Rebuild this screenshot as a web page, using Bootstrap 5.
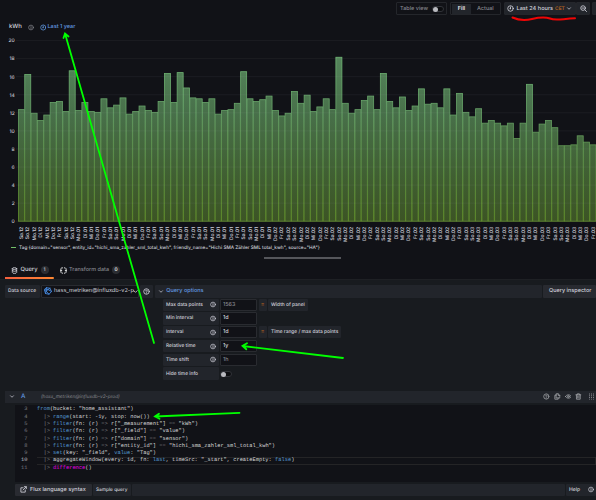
<!DOCTYPE html>
<html lang="en">
<head>
  <meta charset="UTF-8">
  <meta name="viewport" content="width=device-width, initial-scale=1.0">
  <title>Edit panel</title>
  <link href="https://cdn.jsdelivr.net/npm/bootstrap@5.3.0/dist/css/bootstrap.min.css" rel="stylesheet">
  <style>
    body {
      width: 596px;
      height: 500px;
      overflow: hidden;
      background: #111217;
      color: #d2d2dc;
      font: 500 5.5px/8px Inter, "Liberation Sans", sans-serif;
      text-rendering: geometricPrecision;
      white-space: nowrap;
    }
    svg { display: block; flex: none; }
    .ico { width: 7px; height: 7px; fill: none; stroke: currentColor; stroke-width: 1.9; stroke-linecap: round; stroke-linejoin: round; }
    .blue { color: #6299e0; }
    .dim { color: #85868d; }
    .toolbar { height: 16px; padding: 2px 0 2px 396px; }
    .tool-box { height: 13px; border: 1px solid #24262b; border-radius: 1px; flex: none; }
    .tool-solid { background: #22252b; }
    .switch { width: 12px; height: 6px; border: .5px solid #303238; border-radius: 3px; background: #0c0d10; }
    .switch::before { content: ""; display: block; width: 5px; height: 5px; border-radius: 50%; background: #b9bac0; }
    .panel-title { height: 10px; margin-top: 6px; padding-left: 9px; }
    .legend { height: 10px; padding: 1px 0 0 10.5px; font-size: 4.72px; }
    .legend i { width: 5px; height: 1.4px; background: #73bf69; margin-right: 3.5px; }
    .handle { height: 2px; width: 77px; margin: 4.5px 0 0 264px; background: #55565b; }
    .tabs { height: 18px; margin-top: 2px; padding-left: 5px; font-size: 5.5px; }
    .tab-on { width: 48.5px; height: 18px; padding: 1px 0 0 6px; background: linear-gradient(90deg, #f55f3e, #ff8833) bottom/100% 2px no-repeat; }
    .count { min-width: 8px; height: 8px; border-radius: 4px; background: #2b2d32; font-size: 4.8px; }
    .editor { height: 223px; background: #181b1f; border-top: 1px solid #1e2024; }
    .source-row { height: 13px; margin-top: 5px; padding-left: 5px; }
    .cell { height: 12.4px; background: #22252b; border-radius: 1px; padding: 0 3px; flex: none; }
    .field { height: 12.4px; width: 37px; background: #111217; border: 1px solid #292b30; border-radius: 1px; padding: 0 2px; flex: none; }
    .opts { padding-left: 163px; padding-top: .3px; font-size: 4.85px; }
    .opt { height: 13.8px; gap: 1.5px; }
    .opt-name { width: 55.5px; }
    .opt .field { font-size: 5.4px; }
    .eq { width: 8px; color: #c46c1e; padding: 0; font-size: 5.5px; }
    .query-head { height: 12.5px; margin: 10px 0 0 5px; padding-left: 4px; background: #22252b; }
    .code { height: 77.5px; margin: 1.5px 0 0 15px; background: #111217; padding-top: 1.8px; font: 400 5.37px/7.3px "Liberation Mono", monospace; color: #d8d8d8; }
    .code > div { height: 7.3px; white-space: pre; display: flex; }
    .code b { font-weight: 400; width: 22px; padding-right: 9.5px; text-align: right; color: #7c7d82; flex: none; }
    .code .on { box-shadow: inset 22px 0 #111217, inset 0 0 0 .7px #2b2b2d; }
    .code .on b { color: #c6c6c9; }
    .code em { font-style: normal; color: #569cd6; }
    .code s { text-decoration: none; color: #8b8b8e; }
    .code u { text-decoration: none; color: #e800e8; }
    .foot { height: 12.5px; margin: 1.7px 0 0 15px; }
    .marks { position: absolute; left: 0; top: 0; pointer-events: none; }
  </style>
</head>
<body>

<!-- icon shapes -->
<svg width="0" height="0" class="position-absolute">
  <symbol id="clock" viewBox="0 0 16 16"><circle cx="8" cy="8" r="6.3"/><path d="M8 4.5V8.5M8 8.5H6.5"/></symbol>
  <symbol id="info" viewBox="0 0 16 16"><circle cx="8" cy="8" r="6.3"/><path d="M8 7.5V11M8 5V5.2"/></symbol>
  <symbol id="help" viewBox="0 0 16 16"><circle cx="8" cy="8" r="6.3"/><path d="M6 6.5C6 4 10 4 10 6.5C10 8 8 8 8 9.3M8 11.5V11.7"/></symbol>
  <symbol id="down" viewBox="0 0 16 16"><path d="M4 6L8 10L12 6"/></symbol>
  <symbol id="zoomout" viewBox="0 0 16 16"><circle cx="7" cy="7" r="5.3"/><path d="M11 11L15 15M4.7 7H9.3"/></symbol>
  <symbol id="db" viewBox="0 0 16 16"><ellipse cx="8" cy="3.5" rx="5" ry="2"/><path d="M3 3.5V12.5C3 15.4 13 15.4 13 12.5V3.5M3 8C3 10.7 13 10.7 13 8"/></symbol>
  <symbol id="transform" viewBox="0 0 16 16"><path d="M2 6V3.5L4 2H6M10 2H12L14 4V6M14 10V12L12 14H10M6 14H4L2 12V10M1 8H4M12 8H15"/></symbol>
  <symbol id="copy" viewBox="0 0 16 16"><path d="M5 4V1.5H10L14 5.5V11.5H5V4M10 1.5V5.5H14M5 5H2V14.5H10V11.5"/></symbol>
  <symbol id="eye" viewBox="0 0 16 16"><path d="M1 8C4 2.5 12 2.5 15 8C12 13.5 4 13.5 1 8Z"/><circle cx="8" cy="8" r="2.2"/></symbol>
  <symbol id="trash" viewBox="0 0 16 16"><path d="M2 4H14M5.5 4V1.5H10.5V4M3.5 4V14.5H12.5V4M6.5 7V11.5M9.5 7V11.5"/></symbol>
  <symbol id="ext" viewBox="0 0 16 16"><path d="M12 9V14H2V4H7M7 9L14 2M10 1.5H14.5V6"/></symbol>
  <symbol id="influx" viewBox="0 0 16 16"><path d="M5 1.5L12 2.5L15 9L10 14.5L3 13L1 6ZM5 1.5L4 8L10 14.5M12 2.5L4 8L3 13M1 6L8 5L15 9"/></symbol>
</svg>

<div class="toolbar d-flex">
  <div class="tool-box d-flex align-items-center dim" style="width:51px; padding-left:3px">
    <span>Table view</span><span class="switch ms-1"></span>
  </div>
  <div class="tool-box d-flex align-items-center dim" style="width:51px; margin-left:3px; padding-left:1px">
    <span class="tool-solid text-center text-light" style="width:19px; padding:1px 0">Fill</span>
    <span style="margin-left:6px">Actual</span>
  </div>
  <div class="tool-box tool-solid d-flex align-items-center" style="width:72px; margin-left:3px; padding-left:2px">
    <svg class="ico"><use href="#clock"/></svg>
    <span style="margin-left:2.5px; font-size:5.6px">Last 24 hours</span>
    <span style="margin-left:2px; font-size:4.9px; color:#c46c1e">CET</span>
    <svg class="ico" style="width:6px; margin-left:1px"><use href="#down"/></svg>
  </div>
  <div class="tool-box tool-solid d-flex align-items-center justify-content-center" style="width:14px"><svg class="ico"><use href="#zoomout"/></svg></div>
  <div class="tool-box tool-solid" style="width:10px; margin-left:2px"></div>
</div>

<div class="panel-title d-flex align-items-center">
  <span style="font-size:6px">kWh</span>
  <svg class="ico dim" style="width:6px; margin-left:6px"><use href="#info"/></svg>
  <span class="blue d-flex align-items-center" style="margin-left:6px">
    <svg class="ico" style="width:6.5px; margin-right:1px"><use href="#clock"/></svg>Last 1 year
  </span>
</div>

<svg id="chart" width="596" height="210" viewBox="0 32 596 210">
  <defs>
    <linearGradient id="barFill" gradientUnits="userSpaceOnUse" x1="0" y1="40" x2="0" y2="221">
      <stop offset="0" stop-color="#588b60"/>
      <stop offset=".4" stop-color="#48704a"/>
      <stop offset=".75" stop-color="#405f32"/>
      <stop offset="1" stop-color="#3c5425"/>
    </linearGradient>
    <linearGradient id="barLine" gradientUnits="userSpaceOnUse" x1="0" y1="40" x2="0" y2="221">
      <stop offset="0" stop-color="#73bf79"/>
      <stop offset=".4" stop-color="#65a066"/>
      <stop offset=".75" stop-color="#5c8e40"/>
      <stop offset="1" stop-color="#618f2b"/>
    </linearGradient>
  </defs>
</svg>

<div class="legend d-flex align-items-center"><i></i><span>Tag {domain="sensor", entity_id="hichi_sma_zahler_sml_total_kwh", friendly_name="Hichi SMA Zähler SML total_kwh", source="HA"}</span></div>
<div class="handle"></div>

<div class="tabs d-flex">
  <div class="tab-on d-flex align-items-center">
    <svg class="ico"><use href="#db"/></svg><span style="margin:0 3px 0 2.5px; font-size:5.8px">Query</span>
    <span class="count d-flex align-items-center justify-content-center">1</span>
  </div>
  <div class="d-flex align-items-center dim" style="margin-left:6px; padding-top:1px">
    <svg class="ico text-light"><use href="#transform"/></svg><span style="margin:0 3px 0 2.5px">Transform data</span>
    <span class="count d-flex align-items-center justify-content-center text-light">0</span>
  </div>
</div>

<div class="editor">
  <div class="source-row d-flex">
    <div class="cell d-flex align-items-center h-100" style="width:35px; font-size:4.9px">Data source</div>
    <div class="field d-flex align-items-center h-100" style="width:98px; margin-left:1px; font-size:5.6px; font-weight:400">
      <svg class="ico" style="width:8px; height:8px; stroke:#4385d8"><use href="#influx"/></svg>
      <span style="width:77px; margin-left:2px">hass_metriken@influxdb-v2-p</span>
      <svg class="ico" style="margin-left:1px"><use href="#down"/></svg>
    </div>
    <div class="cell d-flex align-items-center h-100" style="width:13px; margin-left:1px"><svg class="ico"><use href="#help"/></svg></div>
    <div class="cell d-flex align-items-center flex-grow-1 h-100" style="margin-left:2px">
      <svg class="ico" style="width:6px"><use href="#down"/></svg><span class="blue" style="margin-left:2.3px">Query options</span>
    </div>
    <div class="cell d-flex align-items-center h-100" style="width:53px; margin-left:1px; padding-left:6px; background:#282a30">Query inspector</div>
  </div>

  <div class="opts" id="options"></div>

  <div class="query-head d-flex align-items-center">
    <svg class="ico" style="width:6px"><use href="#down"/></svg>
    <span class="blue" style="margin-left:6px; font-size:6.2px">A</span>
    <span class="dim fst-italic" style="margin-left:15.5px; font-size:4.75px; font-weight:400">(hass_metriken@influxdb-v2-prod)</span>
    <div class="d-flex ms-auto dim" style="gap:4px; color:#a0a1a7 !important">
      <svg class="ico" style="width:6.7px"><use href="#help"/></svg>
      <svg class="ico" style="width:6.7px"><use href="#copy"/></svg>
      <svg class="ico" style="width:6.7px"><use href="#eye"/></svg>
      <svg class="ico" style="width:6.7px"><use href="#trash"/></svg>
      <svg width="8" height="7" style="margin-left:2px" stroke="#85868d" stroke-dasharray="1 .8"><path d="M1.5 .5V6.5M3.5 .5V6.5M5.5 .5V6.5"/></svg>
    </div>
  </div>

  <div class="code">
    <div><b>3</b><em>from</em>(bucket: "home_assistant")</div>
    <div><b>4</b><s>  |&gt; </s><em>range</em>(start: -1y, stop: now())</div>
    <div><b>5</b><s>  |&gt; </s><em>filter</em>(fn: (r) <s>=&gt;</s> r["_measurement"] <s>==</s> "kWh")</div>
    <div><b>6</b><s>  |&gt; </s><em>filter</em>(fn: (r) <s>=&gt;</s> r["_field"] <s>==</s> "value")</div>
    <div><b>7</b><s>  |&gt; </s><em>filter</em>(fn: (r) <s>=&gt;</s> r["domain"] <s>==</s> "sensor")</div>
    <div><b>8</b><s>  |&gt; </s><em>filter</em>(fn: (r) <s>=&gt;</s> r["entity_id"] <s>==</s> "hichi_sma_zahler_sml_total_kwh")</div>
    <div><b>9</b><s>  |&gt; </s><em>set</em>(key: "_field", <em>value</em>: "Tag")</div>
    <div class="on"><b>10</b><s>  |&gt; </s>aggregateWindow(every: 1d, fn: <em>last</em>, timeSrc: "_start", createEmpty: <em>false</em>)</div>
    <div><b>11</b><s>  |&gt; </s><u>difference</u>()</div>
  </div>

  <div class="foot d-flex">
    <div class="cell d-flex align-items-center" style="width:77px; padding-left:5px; background:#292b31">
      <svg class="ico" style="margin-right:3px"><use href="#ext"/></svg>Flux language syntax
    </div>
    <div class="cell d-flex align-items-center" style="width:38px; margin-left:1px; font-size:4.75px">Sample query</div>
    <div class="cell flex-grow-1" style="margin-left:1px"></div>
    <div class="cell d-flex align-items-center" style="width:30px; margin-left:1px; font-size:5.1px">Help<svg class="ico" style="width:6px; margin-left:8px"><use href="#info"/></svg></div>
  </div>
</div>

<!-- hand drawn annotations -->
<svg class="marks" width="596" height="500" fill="none" stroke="#00ff00" stroke-width="1.8" stroke-linecap="round">
  <path d="M154 343L65 33.5M63.5 38L65 33.5L68.5 36.5"/>
  <path d="M343 358L242.5 346M247 343.3L242.5 346L246.3 349.3"/>
  <path d="M239.5 412.8L155 416.5M159 413.8L155 416.5L159.5 418.8"/>
  <path d="M512.5 17.5C519 20.5 525 20.8 532 19C541 17 545 17 550 18.5C555 21 561 19 575 18.3" stroke="#f00505" stroke-width="2"/>
</svg>

<script src="https://cdn.jsdelivr.net/npm/bootstrap@5.3.0/dist/js/bootstrap.bundle.min.js"></script>
<script>
  // daily consumption in kWh
  const values = [
    12.4, 16.3, 12, 11.2, 11.8, 13.2, 13.3, 12.2, 16.7, 12.3, 13.2, 12.2, 12.1, 13.6, 12.6, 12.9, 13.7, 11.9, 12.2, 12.8,
    12.3, 12.1, 13.3, 16.4, 13.2, 16.5, 14.8, 13.7, 13.6, 13.2, 13.6, 11.9, 12.3, 12.4, 13.1, 16.6, 13.6, 13.3, 13.5, 13.9,
    12.3, 11.7, 12, 14.4, 13.1, 14, 12.2, 12.7, 13.6, 12.4, 18.2, 13.1, 12, 12.4, 13.4, 13.9, 12.4, 16.4, 13.3, 12.6,
    13.8, 12.3, 12.8, 14.7, 13, 13.1, 12.6, 14.7, 11.8, 14.2, 12.1, 11.6, 12.5, 10.9, 11.2, 10.9, 10.6, 10.9, 9.2, 10.9,
    15.2, 9.9, 10.8, 11.2, 10.4, 8.4, 8.4, 8.5, 9.5, 8.8, 8.5
  ];
  const days = ['Sa', 'So', 'Mo', 'Di', 'Mi', 'Do', 'Fr'];
  const step = 6.35, left = 18, base = 221.2, unit = 9.03;

  let svg = '';
  values.forEach((v, i) => {
    const x = left + i * step;
    const top = base - v * unit;
    const month = i < 9 ? '12' : i < 40 ? '01' : i < 69 ? '02' : '03';
    svg += `<rect x="${x + .4}" y="${top + .4}" width="${step - .35}" height="${base - top - .4}" fill="url(#barFill)" stroke="url(#barLine)" stroke-width=".8"/>`;
    svg += `<text transform="translate(${x + 5.1} 227) rotate(-90)" text-anchor="end" font-size="4.9" fill="#ccccd6">${days[i % 7]}.${month}</text>`;
  });
  for (let n = 0; n <= 20; n += 2) {
    const y = base - n * unit;
    svg += `<path d="M16 ${y}H596" stroke="#ccccdc" stroke-opacity=".06" stroke-width="1"/>`;
    svg += `<text x="14.7" y="${y + 1.8}" text-anchor="end" font-size="4.9" fill="#ccccd6">${n}</text>`;
  }
  document.getElementById('chart').insertAdjacentHTML('beforeend', svg);

  const options = [
    { name: 'Max data points', value: '1563', muted: true, note: 'Width of panel' },
    { name: 'Min interval', value: '1d' },
    { name: 'Interval', value: '1d', fixed: true, note: 'Time range / max data points' },
    { name: 'Relative time', value: '1y' },
    { name: 'Time shift', value: '1h', muted: true },
    { name: 'Hide time info' }
  ];

  document.getElementById('options').innerHTML = options.map(o => `
    <div class="opt d-flex align-items-center">
      <div class="cell opt-name d-flex align-items-center justify-content-between">
        <span>${o.name}</span>${o.value ? '<svg class="ico" style="width:6px"><use href="#info"/></svg>' : ''}
      </div>
      ${o.value ? `<div class="field d-flex align-items-center ${o.muted ? 'dim' : ''} ${o.fixed ? 'tool-solid' : ''}">${o.value}</div>` : '<span class="switch"></span>'}
      ${o.note ? `<div class="cell eq d-flex align-items-center justify-content-center">=</div><div class="cell d-flex align-items-center">${o.note}</div>` : ''}
    </div>`).join('');
</script>

</body>
</html>
